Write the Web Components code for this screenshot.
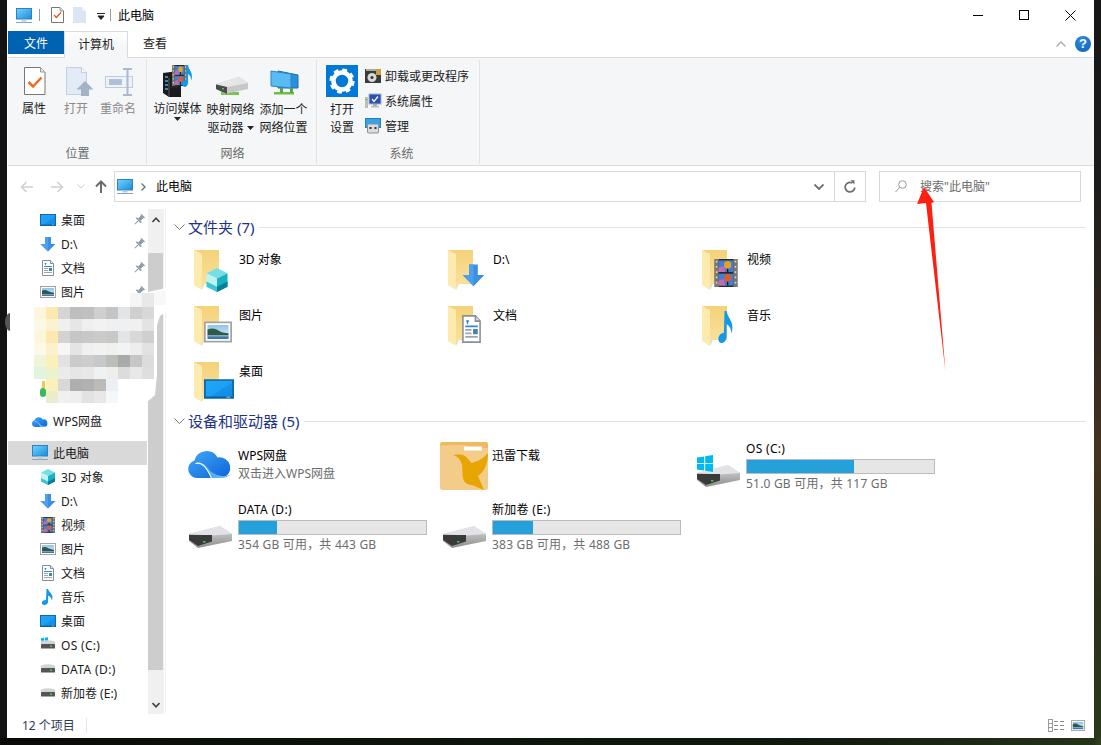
<!DOCTYPE html>
<html lang="zh-CN">
<head>
<meta charset="utf-8">
<title>此电脑</title>
<style>
  html, body { margin: 0; height: 745px; overflow: hidden; }
  body {
    position: relative;
    font: 12px "Noto Sans", "Noto Sans CJK SC", sans-serif;
    /* desktop wallpaper strips that show around the window */
    background-color: #121212;
    background-image:
      linear-gradient(to right, #0a0a08 0, #0c120a 300px, #10180c 800px, #24331a 1094px, #34441f 1101px),
      linear-gradient(to bottom, #161616 0, #1c1c1c 180px, #3a2b1e 390px, #46331f 450px, #2a3018 600px, #2a3a1a 745px);
    background-size: 1101px 7px, 7px 745px;
    background-position: 0 738px, 1094px 0;
    background-repeat: no-repeat;
  }
</style>
</head>
<body>
<file-explorer></file-explorer>
<privacy-mosaic></privacy-mosaic>
<red-arrow></red-arrow>

<script>
// Bodies shared by big and small variants of an icon. All are drawn in a 16x16 box.
const PARTS = {
  pc: `<defs><linearGradient id="pc" x1="0" y1="0" x2="1" y2="1"><stop offset="0" stop-color="#74d4f9"/><stop offset="1" stop-color="#1a8be0"/></linearGradient></defs>
    <rect x=".5" y=".5" width="15" height="10.5" fill="url(#pc)" stroke="#2a84c2"/>
    <rect x="5.5" y="11.5" width="5" height="2" fill="#b9cbd9"/><rect y="14" width="16" height="1" fill="#88a3bb"/>`,
  desktop: `<defs><linearGradient id="dk" x1="0" y1="0" x2="1" y2="1"><stop offset="0" stop-color="#22a6f8"/><stop offset=".55" stop-color="#1c9ff5"/><stop offset=".56" stop-color="#1592ea"/><stop offset="1" stop-color="#118ae0"/></linearGradient></defs>
    <rect x=".5" y="2.5" width="15" height="11" fill="url(#dk)" stroke="#0d6bad"/><rect x="1" y="12.7" width="14" height=".6" fill="#0a4f86"/><rect x="12" y="12.8" width="2" height=".4" fill="#fff"/>`,
  down: `<path d="M5 1h6v7h4.500L8 15.500.5 8H5z" fill="#3b8fe4"/><path d="M5 1h3v14.500L.5 8H5z" fill="#4da0ee"/>`,
  doc: `<path d="M2.500.5h8l3 3v12h-11z" fill="#fff" stroke="#8a8f96"/><path d="M10.500.5v3h3" fill="#dfe4ea" stroke="#8a8f96"/>
    <path d="M4.500 3l2 0-1 2.500z" fill="#2d7fd0"/><path d="M4 6.500h8" stroke="#2d8ad8"/><path d="M4 8.500h4M4 10.500h4M4 12.500h8" stroke="#9aa5b0"/><rect x="9" y="8" width="3" height="3" fill="#4c80a8"/>`,
  picture: `<defs><linearGradient id="sky" x1="0" y1="0" x2="0" y2="1"><stop offset="0" stop-color="#8fc4e8"/><stop offset="1" stop-color="#e4f1f6"/></linearGradient></defs>
    <rect x=".5" y="2.5" width="15" height="11" fill="#fff" stroke="#a3a3a3"/><rect x="2" y="4" width="12" height="8" fill="url(#sky)"/>
    <path d="M2 6.500c3-1.200 5-.3 7 1 2 .9 3 1 5 1.200V10H2z" fill="#2f5a48"/><rect x="2" y="10" width="12" height="2" fill="#3f76ac"/><rect x="2" y="10" width="12" height=".5" fill="#a8c8dc"/>`,
  film: `<rect x="1" width="14" height="16" fill="#2a2a2a"/><rect x="1" width="2.500" height="16" fill="#777"/><rect x="12.500" width="2.500" height="16" fill="#777"/>
    <path d="M1.700 1h1v1h-1zM1.700 4h1v1h-1zM1.700 7h1v1h-1zM1.700 10h1v1h-1zM1.700 13h1v1h-1zM13.300 1h1v1h-1zM13.300 4h1v1h-1zM13.300 7h1v1h-1zM13.300 10h1v1h-1zM13.300 13h1v1h-1z" fill="#e8d7a0"/>
    <rect x="3.500" y=".8" width="9" height="6.600" fill="#3f7fd8"/><rect x="3.500" y="8.400" width="9" height="6.800" fill="#3f7fd8"/>
    <path d="M3.500 5l3-1 1 3.400h-4.500zM3.500 12.400l3-1 1 3.800h-4.500z" fill="#c66ab0"/>
    <circle cx="9" cy="3.400" r="2.200" fill="#e8a21e"/><circle cx="9" cy="10.800" r="2.200" fill="#e05a2a"/><path d="M8.600 5.500h.8v2h-.8zM8.600 13h.8v2h-.8z" fill="#111"/>`,
  note: `<path d="M6.500 0h1.600c.3 2.800 4.400 4.400 4.400 8.300 0 1.200-.4 2.300-1 3 .3-2.700-1.700-4-3.400-4.800v6.200c0 1.800-1.900 3.300-3.800 3.300-1.400 0-2.500-.8-2.500-2 0-1.700 2-3 3.800-3 .1 0 .2 0 .4 0z" fill="#129ae8"/>`,
  cube: `<path d="M8 0l7 3.500L8 7 1 3.500z" fill="#74e0e6"/><path d="M1 3.500L8 7v9l-7-3.500z" fill="#bff2f2"/><path d="M15 3.500L8 7v9l7-3.500z" fill="#19b0c2"/><path d="M1 9l7 3.500V16l-7-3.500z" fill="#3cc6d2"/><path d="M15 9l-7 3.500V16l7-3.500z" fill="#0a7f9a"/>`,
  smalldrive: `<path d="M1 4.500Q8 2 15 4.500V7H1z" fill="#d4d4d6"/><rect x="1" y="7" width="14" height="4.500" rx=".5" fill="#555"/><rect x="10" y="8.500" width="2" height="1.300" fill="#41dc55"/>`,
  winpanes: `<path d="M1 1.300l3-.5v3H1zM4.800.700L8 .2v3.600H4.800zM1 4.500h3v3l-3-.5zM4.800 4.500H8v3.800l-3.200-.5z" fill="#00b4f1"/>`,
  cloud: `<defs><linearGradient id="wps" x1="0" y1="0" x2="1" y2="1"><stop offset="0" stop-color="#40a9f8"/><stop offset="1" stop-color="#0e63da"/></linearGradient>
    <linearGradient id="wpb" x1="0" y1="0" x2="1" y2="0"><stop offset="0" stop-color="#2a9af5"/><stop offset="1" stop-color="#75c8fb"/></linearGradient></defs>
    <path d="M9 30a9 9 0 0 1-2.500-17.600A12.500 12.500 0 0 1 29.500 9.500 10.200 10.200 0 0 1 34 30z" fill="url(#wps)"/>
    <path d="M7.500 15.800C15 13 20 20 24.500 30H34c3 0 6-1 8-3C34 30 25 27 20 20 16 15 12 14 7.500 15.800z" fill="url(#wpb)"/>
    <path d="M7.500 15.500C15 13.500 19.500 21 23.500 30" fill="none" stroke="#fff" stroke-width="1.200"/>`
};

const fit = (name, x, y, w, h) => `<svg x="${x}" y="${y}" width="${w}" height="${h}" viewBox="0 0 16 16" preserveAspectRatio="none">${PARTS[name]}</svg>`;

const FOLDER = `<defs><linearGradient id="fb" x1="0" y1="0" x2="0" y2="1"><stop offset="0" stop-color="#f5d27a"/><stop offset="1" stop-color="#f9e09a"/></linearGradient></defs>
  <path d="M4 2h25v34H12z" fill="url(#fb)"/><path d="M4 2l8 4v36l-8-5z" fill="#fdeaae"/><path d="M12 36v6l3-6z" fill="#e9e0c0"/>`;

const bigDrive = `<defs><linearGradient id="hd" x1="0" y1="0" x2="0" y2="1"><stop offset="0" stop-color="#dcdcde"/><stop offset="1" stop-color="#8e8e8e"/></linearGradient></defs>
  <path d="M0 8L31 0l12 8v7L9 22l-9-7z" fill="url(#hd)"/><path d="M0 8L31 0l12 8-20 1.500z" fill="#e2e3e7"/>
  <path d="M0 9h23v6.500L9 20 0 14z" fill="#3a3a3a"/><rect x="14" y="15" width="2.500" height="1.500" fill="#35d04a"/>`;

const ICONS = {
  pc: [16, 16, PARTS.pc], desktop: [16, 16, PARTS.desktop], down: [16, 16, PARTS.down], doc: [16, 16, PARTS.doc],
  picture: [16, 16, PARTS.picture], film: [16, 16, PARTS.film], note: [16, 16, PARTS.note], cube: [16, 16, PARTS.cube],
  drive: [16, 16, PARTS.smalldrive], windrive: [16, 16, PARTS.winpanes + PARTS.smalldrive],
  cloud: [44, 30, PARTS.cloud],
  pin: [12, 12, `<g transform="rotate(45 6 6)" fill="#8b98a3"><rect x="3.500" y="0" width="5" height="1.500"/><rect x="4.300" y="1.500" width="3.400" height="4"/><rect x="2.500" y="5.500" width="7" height="1.500"/><rect x="5.500" y="7" width="1" height="5"/></g>`],

  // Large tiles: folder plus the overlay for its kind
  f3d: [48, 48, FOLDER + fit('cube', 15, 20, 24, 24)],
  fdown: [48, 48, FOLDER + fit('down', 18, 15, 23, 24)],
  fvideo: [48, 48, FOLDER + fit('film', 15, 11, 26, 28)],
  fpic: [48, 48, FOLDER + fit('picture', 14, 14, 28, 28)],
  fdoc: [48, 48, FOLDER + fit('doc', 15, 11, 25, 28)],
  fnote: [48, 48, FOLDER + fit('note', 18, 7, 21, 32)],
  fdesk: [48, 48, FOLDER + fit('desktop', 14, 16, 30, 26)],
  xunlei: [48, 48, `<rect width="48" height="48" rx="2.500" fill="#f3cc8a"/><path d="M0 3.500Q0 0 3 0h42q3 0 3 3v3H30l-6-3z" fill="#efb95f"/><rect x="24" y="4.500" width="18" height="4" rx=".5" fill="#fff"/>
    <path d="M13 13C17 12.500 21 12 24 13.500 27 15 29 18 31 21 37 20 43 17 48 11 48 22 44 30 38 34L44 48 32 43C28 43 24 41 23 36 22 30 23 24 21 20 19 16 17 14 13 13Z" fill="#e8a400"/>`],
  hdd: [44, 22, bigDrive],
  winhdd: [44, 34, `<g transform="translate(0 10)">${bigDrive}</g><path d="M0 2.500L7.200 1.500v6.700H0zM8.200 1.300L16 0v8.200H8.200zM0 9h7.200v6.500L0 14.500zM8.200 9H16v8L8.200 15.800z" fill="#00b9f2"/>`],

  // Ribbon, 36x36 box
  props: [36, 36, `<path d="M8.500 5.500h16l4.500 4.500v22.500H8.500z" fill="#fff" stroke="#777"/><path d="M24.500 5.500V10H29" fill="#e6e6e6" stroke="#999"/><path d="M12.500 20l4.500 4.500 8.500-9" fill="none" stroke="#f26a21" stroke-width="2.500"/>`],
  propsmall: [13, 16, `<path d="M.5.500h8.500l3.500 3.500v11.500H.5z" fill="#fff" stroke="#777"/><path d="M9 .5V4h3.500" fill="#ddd" stroke="#999"/><path d="M3 8l2.300 2.500L10 5.500" fill="none" stroke="#e8521e" stroke-width="1.300"/>`],
  blankdoc: [13, 16, `<path d="M0 0h9l4 4v12H0z" fill="#dbe6f4"/><path d="M9 0l4 4H9z" fill="#f0f5fb"/>`],
  open: [36, 36, `<path d="M8.500 5.500h15l5 5v22h-20z" fill="#e3ebf6" stroke="#c0cfe2"/><path d="M23.500 5.500v5h5" fill="#f4f7fb" stroke="#c0cfe2"/><path d="M27 19l8.500 8.500H31V34h-8v-6.500h-4.500z" fill="#a3b2c4"/>`],
  rename: [36, 36, `<rect x="5.500" y="14.500" width="27" height="11" fill="#eef3f9" stroke="#bdcbdc"/><rect x="9" y="17" width="13" height="6" fill="#b0c1d6"/><path d="M23 7h9M27.500 7v26M23 33h9" fill="none" stroke="#a9bace" stroke-width="2"/>`],
  media: [36, 36, `<path d="M3 11l15-2 3 5v21H9L3 31z" fill="#1b1b1f"/><path d="M9 16v19" stroke="#5b5b66"/><path d="M5 15h3M5 19h3M5 23h3M5 27h3" stroke="#4aa8e8" stroke-width="1.300"/><path d="M11 21h7M11 25h7" stroke="#333"/>
    ${fit('film', 11, 3, 17, 21)}${fit('note', 21, 3, 14, 22)}`],
  netdrive: [36, 36, `<path d="M8 30h18v3H8z" fill="#7cc24e"/><path d="M15 26h4v5h-4z" fill="#5aa83a"/><path d="M3 22L26 15l9 6v6L12 32l-9-5z" fill="#c8c8c8"/><path d="M3 22L26 15l9 6-21 4z" fill="#e6e6e6"/><path d="M3 22.500l11 2.500v7l-11-5z" fill="#4a4a4a"/><rect x="9" y="26" width="2" height="1.500" fill="#35d04a"/>`],
  addnet: [36, 36, `<path d="M12 9l20 4v13H12z" fill="#2a8fdc" stroke="#1c6eb2"/><path d="M5 9l20 3v14L5 24z" fill="#58bcf2" stroke="#2c86c8"/><path d="M8 30h20v2.500H8z" fill="#72bc4a"/><path d="M14 26h3v5h-3zM24 26h3v5h-3z" fill="#5aa83a"/>`],
  gear: [36, 36, `<rect x="2" y="3" width="32" height="32" fill="#0078d7"/><circle cx="18" cy="19" r="8.500" fill="none" stroke="#fff" stroke-width="4.500"/><circle cx="18" cy="19" r="10.800" fill="none" stroke="#fff" stroke-width="3.600" stroke-dasharray="4.600 3.880"/>`],
  uninstall: [16, 16, `<rect y="1" width="16" height="14" fill="#3a3a3a"/><rect x="11" y="1" width="5" height="6" fill="#c9a23e"/><rect x="1" y="1" width="10" height="2" fill="#a5ae96"/><circle cx="7" cy="9.500" r="4.500" fill="#d8d8d8"/><circle cx="7" cy="9.500" r="1.500" fill="#333"/>`],
  sysprops: [16, 16, `<rect x="4" y="1" width="12" height="10" fill="#2a4fb5" stroke="#a7b4c4"/><path d="M7 6l2 2.500 4-5" fill="none" stroke="#fff" stroke-width="1.300"/><path d="M8 11h4v2H8z" fill="#aaa"/><rect x="6" y="13" width="8" height="1.500" fill="#bbb"/><rect y="4" width="3" height="11" fill="#b9c0b4"/><rect x=".8" y="6" width="1.400" height="1" fill="#3ec04a"/>`],
  manage: [16, 16, `<rect x=".5" y=".5" width="15" height="9" fill="#33a4ea" stroke="#2a80bc"/><rect x="2.500" y="6" width="11" height="9" rx="1" fill="#d8dce0" stroke="#8a9096"/><rect x="4.500" y="9" width="2" height="2" fill="#333"/><rect x="9.500" y="9" width="2" height="2" fill="#333"/>`]
};

class AppIcon extends HTMLElement {
  connectedCallback() {
    const [vw, vh, body] = ICONS[this.getAttribute('name')];
    const w = this.getAttribute('w') || vw;
    const h = this.getAttribute('h') || vh;
    this.attachShadow({ mode: 'open' }).innerHTML = `
      <style>:host { display: block; flex: none; width: ${w}px; height: ${h}px; } svg { display: block; overflow: visible; }</style>
      <svg width="${w}" height="${h}" viewBox="0 0 ${vw} ${vh}">${body}</svg>`;
  }
}
customElements.define('app-icon', AppIcon);

// Title bar with quick access toolbar and window buttons
class TitleBar extends HTMLElement {
  connectedCallback() {
    this.attachShadow({ mode: 'open' }).innerHTML = `
      <style>
        :host { display: flex; align-items: center; height: 30px; padding-left: 8px; color: #000; }
        .sep { width: 1px; height: 12px; background: #9a9a9a; }
        .caps { margin-left: auto; display: flex; padding-right: 1px; }
        .caps div { width: 46px; height: 30px; display: flex; align-items: center; justify-content: center; }
        .title { margin-left: 7px; }
      </style>
      <app-icon name="pc" style="margin-top:1px"></app-icon>
      <span class="sep" style="margin-left:7px"></span>
      <app-icon name="propsmall" style="margin-left:11px"></app-icon>
      <app-icon name="blankdoc" style="margin-left:9px"></app-icon>
      <svg width="8" height="7" style="margin-left:11px;margin-top:2px"><path d="M0 .5h8M1 3h6L4 6.500z" stroke="#222" stroke-width="1" fill="#222"/></svg>
      <span class="sep" style="margin-left:5px"></span>
      <span class="title">此电脑</span>
      <div class="caps">
        <div><svg width="10" height="10"><path d="M0 5.500h10" stroke="#000"/></svg></div>
        <div><svg width="10" height="10"><rect x=".5" y=".5" width="9" height="9" fill="none" stroke="#000"/></svg></div>
        <div><svg width="11" height="11"><path d="M.5.500l10 10M10.500.500l-10 10" stroke="#000"/></svg></div>
      </div>`;
  }
}
customElements.define('title-bar', TitleBar);

class RibbonTabs extends HTMLElement {
  connectedCallback() {
    this.attachShadow({ mode: 'open' }).innerHTML = `
      <style>
        :host { display: flex; height: 27px; position: relative; box-sizing: border-box; padding-top: 1px; }
        .tab { width: 54px; height: 23px; display: flex; align-items: center; justify-content: center; color: #222; }
        .file { width: 56px; background: #0063b1; color: #fff; }
        .active { height: 27px; background: linear-gradient(#fff, #f5f6f7 60%); border: 1px solid #dadbdc; border-bottom: 0; padding-bottom: 3px; box-sizing: border-box; width: 64px; position: relative; z-index: 1; }
        .help { margin-left: auto; display: flex; align-items: center; height: 25px; gap: 9px; padding-right: 3px; }
        .q { width: 16px; height: 16px; border-radius: 50%; background: radial-gradient(circle at 40% 30%, #2f8ae0, #0a5fb4); color: #fff; font: bold 13px/16px "Liberation Sans", sans-serif; text-align: center; }
      </style>
      <div class="tab file">文件</div>
      <div class="tab active">计算机</div>
      <div class="tab">查看</div>
      <div class="help">
        <svg width="10" height="6"><path d="M.5 5.500L5 1l4.500 4.500" fill="none" stroke="#aaa" stroke-width="1.300"/></svg>
        <div class="q">?</div>
      </div>`;
  }
}
customElements.define('ribbon-tabs', RibbonTabs);

class RibbonGroup extends HTMLElement {
  connectedCallback() {
    this.attachShadow({ mode: 'open' }).innerHTML = `
      <style>
        :host { display: flex; flex-direction: column; box-sizing: border-box; height: 104px; margin-top: 2px; border-right: 1px solid #e2e3e4; }
        .body { display: flex; flex: 1; padding-top: 2px; }
        .label { text-align: center; color: #6a6a6a; line-height: 18px; height: 18px; margin-bottom: 1px; margin-right: ${this.getAttribute('shift') || 0}px; }
      </style>
      <div class="body"><slot></slot></div>
      <div class="label">${this.getAttribute('label')}</div>`;
  }
}
customElements.define('ribbon-group', RibbonGroup);

class RibbonButton extends HTMLElement {
  connectedCallback() {
    const off = this.hasAttribute('disabled');
    this.attachShadow({ mode: 'open' }).innerHTML = `
      <style>
        :host { display: flex; flex-direction: column; align-items: center; text-align: center; line-height: 18px; color: ${off ? '#8a8a8a' : '#222'}; }
        app-icon { margin-bottom: ${this.getAttribute('drop') || 3}px; }
      </style>
      <app-icon name="${this.getAttribute('icon')}"></app-icon>
      <div><slot></slot></div>`;
  }
}
customElements.define('ribbon-button', RibbonButton);

class RibbonSmall extends HTMLElement {
  connectedCallback() {
    this.attachShadow({ mode: 'open' }).innerHTML = `
      <style>:host { display: flex; align-items: center; gap: 4px; height: 24px; color: #222; white-space: nowrap; }</style>
      <app-icon name="${this.getAttribute('icon')}"></app-icon><slot></slot>`;
  }
}
customElements.define('ribbon-small', RibbonSmall);

class RibbonPanel extends HTMLElement {
  connectedCallback() {
    const caret = `<svg width="7" height="4" style="vertical-align:2px"><path d="M0 0h7L3.500 4z" fill="#222"/></svg>`;
    this.attachShadow({ mode: 'open' }).innerHTML = `
      <style>
        :host { display: flex; height: 109px; box-sizing: border-box; background: #f5f6f7; border-top: 1px solid #dadbdc; border-bottom: 1px solid #dadbdc; }
        .w42 { width: 42px; } .w53 { width: 53px; } .w36 { width: 36px; }
        .place { width: 139px; padding-left: 5px; box-sizing: border-box; }
        .net { width: 170px; padding-left: 4px; box-sizing: border-box; }
        .sys { width: 163px; padding-left: 7px; box-sizing: border-box; }
        .list { margin-left: 5px; margin-top: 2px; display: flex; flex-direction: column; gap: 1px; }
      </style>
      <ribbon-group class="place" label="位置" shift="4">
        <ribbon-button class="w42" icon="props" drop="2">属性</ribbon-button>
        <ribbon-button class="w42" icon="open" drop="2" disabled>打开</ribbon-button>
        <ribbon-button class="w42" icon="rename" drop="2" disabled>重命名</ribbon-button>
      </ribbon-group>
      <ribbon-group class="net" label="网络" shift="2">
        <ribbon-button class="w53" icon="media" drop="2"><span style="white-space:nowrap">访问媒体</span><div style="line-height:8px;margin-top:-3px">${caret}</div></ribbon-button>
        <ribbon-button class="w53" icon="netdrive"><span style="white-space:nowrap">映射网络<br>驱动器 ${caret}</span></ribbon-button>
        <ribbon-button class="w53" icon="addnet"><span style="white-space:nowrap">添加一个<br>网络位置</span></ribbon-button>
      </ribbon-group>
      <ribbon-group class="sys" label="系统">
        <ribbon-button class="w36" icon="gear">打开<br>设置</ribbon-button>
        <div class="list">
          <ribbon-small icon="uninstall">卸载或更改程序</ribbon-small>
          <ribbon-small icon="sysprops">系统属性</ribbon-small>
          <ribbon-small icon="manage">管理</ribbon-small>
        </div>
      </ribbon-group>`;
  }
}
customElements.define('ribbon-panel', RibbonPanel);

class AddressBar extends HTMLElement {
  connectedCallback() {
    this.attachShadow({ mode: 'open' }).innerHTML = `
      <style>
        :host { display: flex; align-items: flex-start; height: 42px; box-sizing: border-box; padding: 5px 13px 0 12px; }
        .navs { display: flex; align-items: center; height: 31px; width: 94px; flex: none; }
        .box { height: 31px; box-sizing: border-box; border: 1px solid #d9d9d9; display: flex; align-items: center; }
        .box span { position: relative; top: -1px; }
        .addr { width: 752px; padding-left: 2px; flex: none; }
        .search { width: 202px; margin-left: 13px; padding-left: 15px; color: #6d6d6d; flex: none; }
        .end { margin-left: auto; display: flex; align-items: center; height: 100%; }
        .drop { width: 30px; display: flex; justify-content: center; }
        .refresh { width: 30px; height: 100%; border-left: 1px solid #d9d9d9; display: flex; align-items: center; justify-content: center; }
      </style>
      <div class="navs">
        <svg width="14" height="12"><path d="M13 6H2M6.500 1L1.500 6l5 5" fill="none" stroke="#cfcfcf" stroke-width="1.500"/></svg>
        <svg width="14" height="12" style="margin-left:16px"><path d="M1 6h11M7.500 1l5 5-5 5" fill="none" stroke="#cfcfcf" stroke-width="1.500"/></svg>
        <svg width="8" height="5" style="margin-left:13px"><path d="M.5.500L4 4l3.500-3.500" fill="none" stroke="#cfcfcf"/></svg>
        <svg width="12" height="13" style="margin-left:10px"><path d="M6 13V2M1 6.500L6 1.500l5 5" fill="none" stroke="#6b6b6b" stroke-width="2"/></svg>
      </div>
      <div class="box addr">
        <app-icon name="pc"></app-icon>
        <svg width="5" height="8" style="margin-left:8px;margin-right:10px"><path d="M.5.500L4 4 .5 7.500" fill="none" stroke="#6b6b6b" stroke-width="1.300"/></svg>
        <span>此电脑</span>
        <div class="end">
          <div class="drop"><svg width="10" height="6"><path d="M.5.500L5 5 9.500.500" fill="none" stroke="#6b6b6b" stroke-width="1.800"/></svg></div>
          <div class="refresh"><svg width="12" height="13" viewBox="0 0 12 13"><path d="M8.500 3A4.800 4.800 0 1 0 10.800 7.500" fill="none" stroke="#6f6f6f" stroke-width="1.800"/><path d="M6.500 .3l4 0 0 4.200z" fill="#6f6f6f"/></svg></div>
        </div>
      </div>
      <div class="box search">
        <svg width="12" height="13" viewBox="0 0 12 13"><circle cx="7.500" cy="4.500" r="3.800" fill="none" stroke="#9a9a9a"/><path d="M4.800 7.200L.5 12" stroke="#b58f80"/></svg>
        <span style="margin-left:13px">搜索"此电脑"</span>
      </div>`;
  }
}
customElements.define('address-bar', AddressBar);

class NavItem extends HTMLElement {
  connectedCallback() {
    const selected = this.hasAttribute('selected');
    const top = this.hasAttribute('top');
    const icon = this.getAttribute('icon');
    this.attachShadow({ mode: 'open' }).innerHTML = `
      <style>
        :host { display: flex; align-items: center; height: 24px; padding-left: ${top ? 24 : 32}px; gap: 5px; color: #1a1a1a; background: ${selected ? '#d9d9d9' : 'transparent'}; white-space: nowrap; }
        .pin { margin-left: auto; margin-right: 2px; }
      </style>
      <app-icon name="${icon}" w="16" h="${icon === 'cloud' ? 11 : 16}"></app-icon>
      <slot></slot>
      ${this.hasAttribute('pinned') ? '<app-icon class="pin" name="pin"></app-icon>' : ''}`;
  }
}
customElements.define('nav-item', NavItem);

class NavPane extends HTMLElement {
  connectedCallback() {
    this.attachShadow({ mode: 'open' }).innerHTML = `
      <style>
        :host { display: flex; flex: none; width: 158px; box-sizing: border-box; border-right: 1px solid #f0f0f0; }
        .list { width: 139px; flex: none; }
        .bar { width: 16px; margin: 1px 0 0 1px; background: #f0f0f0; display: flex; flex-direction: column; }
        .end { height: 44px; display: flex; justify-content: center; padding-top: 8px; box-sizing: border-box; }
        .end.low { align-items: flex-end; padding: 0 0 6px; }
        .thumb { flex: 1; background: #cdcdcd; width: 15px; }
      </style>
      <div class="list">
        <nav-item icon="desktop" pinned>桌面</nav-item>
        <nav-item icon="down" pinned>D:\\</nav-item>
        <nav-item icon="doc" pinned>文档</nav-item>
        <nav-item icon="picture" pinned>图片</nav-item>
        <div style="height:105px"></div>
        <nav-item icon="cloud" top>WPS网盘</nav-item>
        <div style="height:8px"></div>
        <nav-item icon="pc" top selected>此电脑</nav-item>
        <nav-item icon="cube">3D 对象</nav-item>
        <nav-item icon="down">D:\\</nav-item>
        <nav-item icon="film">视频</nav-item>
        <nav-item icon="picture">图片</nav-item>
        <nav-item icon="doc">文档</nav-item>
        <nav-item icon="note">音乐</nav-item>
        <nav-item icon="desktop">桌面</nav-item>
        <nav-item icon="windrive" style="letter-spacing:.3px">OS (C:)</nav-item>
        <nav-item icon="drive" style="letter-spacing:.4px">DATA (D:)</nav-item>
        <nav-item icon="drive">新加卷 (E:)</nav-item>
      </div>
      <div class="bar">
        <div class="end"><svg width="8" height="6"><path d="M.5 5L4 1.200 7.500 5" fill="none" stroke="#444" stroke-width="1.600"/></svg></div>
        <div class="thumb"></div>
        <div class="end low"><svg width="8" height="6"><path d="M.5 1L4 4.800 7.500 1" fill="none" stroke="#444" stroke-width="1.600"/></svg></div>
      </div>`;
  }
}
customElements.define('nav-pane', NavPane);

class GroupHeader extends HTMLElement {
  connectedCallback() {
    this.attachShadow({ mode: 'open' }).innerHTML = `
      <style>
        :host { display: flex; align-items: center; height: 20px; padding: 0 8px; color: #1e3287; font-size: 15px; }
        svg { margin-right: 3px; flex: none; }
        span { position: relative; top: -1px; }
        .line { flex: 1; height: 1px; background: #e2e2e2; margin-left: 5px; }
      </style>
      <svg width="11" height="6"><path d="M.5.500L5.500 5.500 10.500.500" fill="none" stroke="#777"/></svg>
      <span><slot></slot></span>
      <div class="line"></div>`;
  }
}
customElements.define('group-header', GroupHeader);

// Folder tile: 48px icon and a name beside it
class FolderTile extends HTMLElement {
  connectedCallback() {
    this.attachShadow({ mode: 'open' }).innerHTML = `
      <style>
        :host { display: flex; height: 56px; color: #000; }
        app-icon { margin: 3px 1px 0 0; }
        div { padding-top: 6px; line-height: 18px; white-space: nowrap; }
      </style>
      <app-icon name="${this.getAttribute('icon')}"></app-icon><div><slot></slot></div>`;
  }
}
customElements.define('folder-tile', FolderTile);

class LinkTile extends HTMLElement {
  connectedCallback() {
    const sub = this.getAttribute('sub');
    const ox = this.getAttribute('ox') || 0;
    const oy = this.getAttribute('oy') || 0;
    this.attachShadow({ mode: 'open' }).innerHTML = `
      <style>
        :host { display: flex; height: 61px; color: #000; }
        .pic { width: 49px; flex: none; }
        .text { padding-top: 11px; line-height: 18px; white-space: nowrap; }
        .sub { color: #6d6d6d; }
      </style>
      <div class="pic"><app-icon name="${this.getAttribute('icon')}" style="margin:${oy}px 0 0 ${ox}px"></app-icon></div>
      <div class="text"><slot></slot>${sub ? `<div class="sub">${sub}</div>` : ''}</div>`;
  }
}
customElements.define('link-tile', LinkTile);

class DriveTile extends HTMLElement {
  connectedCallback() {
    const pct = this.getAttribute('used');
    const oy = this.getAttribute('oy') || 29;
    this.attachShadow({ mode: 'open' }).innerHTML = `
      <style>
        :host { display: flex; height: 61px; color: #000; }
        .pic { width: 49px; flex: none; }
        .info { width: 189px; padding-top: 4px; white-space: nowrap; }
        .name { line-height: 18px; height: 19px; letter-spacing: .3px; }
        .bar { height: 15px; box-sizing: border-box; border: 1px solid #bcbcbc; background: #e6e6e6; }
        .bar div { height: 100%; width: ${pct}px; background: #26a0da; }
        .sub { color: #6d6d6d; line-height: 18px; margin-top: 1px; letter-spacing: .2px; }
      </style>
      <div class="pic"><app-icon name="${this.getAttribute('icon')}" style="margin-top:${oy}px"></app-icon></div>
      <div class="info">
        <div class="name"><slot></slot></div>
        <div class="bar"><div></div></div>
        <div class="sub">${this.getAttribute('space')}</div>
      </div>`;
  }
}
customElements.define('drive-tile', DriveTile);

class ItemsView extends HTMLElement {
  connectedCallback() {
    this.attachShadow({ mode: 'open' }).innerHTML = `
      <style>
        :host { display: block; flex: 1; padding-top: 9px; }
        .grid { display: grid; grid-template-columns: repeat(3, 254px); padding-left: 24px; padding-top: 8px; }
        .dev { padding-left: 23px; padding-top: 5px; }
      </style>
      <group-header>文件夹 (7)</group-header>
      <div class="grid">
        <folder-tile icon="f3d">3D 对象</folder-tile>
        <folder-tile icon="fdown">D:\\</folder-tile>
        <folder-tile icon="fvideo">视频</folder-tile>
        <folder-tile icon="fpic">图片</folder-tile>
        <folder-tile icon="fdoc">文档</folder-tile>
        <folder-tile icon="fnote">音乐</folder-tile>
        <folder-tile icon="fdesk">桌面</folder-tile>
      </div>
      <group-header style="margin-top:-2px">设备和驱动器 (5)</group-header>
      <div class="grid dev">
        <link-tile icon="cloud" ox="-1" oy="12" sub="双击进入WPS网盘">WPS网盘</link-tile>
        <link-tile icon="xunlei" ox="-3" oy="6">迅雷下载</link-tile>
        <drive-tile icon="winhdd" used="107" oy="19" space="51.0 GB 可用，共 117 GB">OS (C:)</drive-tile>
        <drive-tile icon="hdd" used="38" space="354 GB 可用，共 443 GB">DATA (D:)</drive-tile>
        <drive-tile icon="hdd" used="40" space="383 GB 可用，共 488 GB">新加卷 (E:)</drive-tile>
      </div>`;
  }
}
customElements.define('items-view', ItemsView);

class StatusBar extends HTMLElement {
  connectedCallback() {
    this.attachShadow({ mode: 'open' }).innerHTML = `
      <style>
        :host { display: flex; align-items: center; height: 24px; padding: 0 9px 2px 14px; box-sizing: border-box; color: #2d3b55; }
        .sep { width: 1px; height: 15px; background: #e6e6e6; margin-left: 11px; }
        .views { margin-left: auto; display: flex; align-items: center; gap: 7px; }
      </style>
      <span>12 个项目</span><span class="sep"></span>
      <div class="views">
        <svg width="16" height="13"><g fill="none" stroke="#9a9a9a"><rect x=".5" y=".5" width="4" height="4"/><rect x=".5" y="4.500" width="4" height="4"/><rect x=".5" y="8.500" width="4" height="4"/></g><path d="M6 2.500h4M12 2.500h4M6 6.500h4M12 6.500h4M6 10.500h4M12 10.500h4" stroke="#8a8a8a"/></svg>
        <svg width="14" height="11" viewBox="0 2 16 12" preserveAspectRatio="none">${PARTS.picture}</svg>
      </div>`;
  }
}
customElements.define('status-bar', StatusBar);

class FileExplorer extends HTMLElement {
  connectedCallback() {
    this.attachShadow({ mode: 'open' }).innerHTML = `
      <style>
        :host { display: flex; flex-direction: column; box-sizing: border-box; width: 1087px; height: 738px; margin-left: 7px; padding-left: 1px; background: #fff; }
        .main { display: flex; flex: 1; min-height: 0; }
      </style>
      <title-bar></title-bar>
      <ribbon-tabs></ribbon-tabs>
      <ribbon-panel></ribbon-panel>
      <address-bar></address-bar>
      <div class="main"><nav-pane></nav-pane><items-view></items-view></div>
      <status-bar></status-bar>`;
  }
}
customElements.define('file-explorer', FileExplorer);

// Pixelated patch that hides a few navigation entries in the screenshot
class PrivacyMosaic extends HTMLElement {
  connectedCallback() {
    const rows = [
      ['#fdf5dc','#fde9b0','#d5d5d5','#bebebe','#c0c0c0','#cfcfcf','#c4c4c4','#e2e4e6','#cfcfcf','#d8d8d8'],
      ['#fcf8e8','#fdf2cf','#f0f0f0','#e6e6e6','#efefef','#f2f2f2','#f0f0f0','#eff0f2','#f0f0f0','#e2e3e5'],
      ['#fdf5dc','#fde8b0','#d5d2d2','#c6c6c6','#c8c8c8','#cccbca','#c8c8c6','#e2e4e6','#d8d8d8','#d0d0d0'],
      ['#fdf9e9','#fdf0cc','#f6f6f4','#e4e4e4','#f0f0f0','#f2f2f2','#f0f0ee','#f2f3f4','#eeeeee','#e2e2e2'],
      ['#eef5d8','#fbf0b8','#e2e2e2','#cbcbcb','#cdcdcd','#c6c8ca','#bdbdb9','#a9abab','#c6c6c6','#dcdcdc'],
      ['#e0f4de','#eef2cc','#ebebeb','#e6e6e6','#e8e8e8','#f0f1f2','#eeeeec','#dcdcdc','#e8e8e8','#dedede'],
      [null,'#fbf0b8','#d8d8d8','#aeaeae','#b0b2b2','#bcbbb8','#eaf0f5',null,null,null],
      [null,'#e9edcc','#f0f0f0','#eeeeee','#e2e2e2','#e8e8e8','#f5f7f9',null,null,null]
    ];
    let cells = '';
    rows.forEach((row, r) => row.forEach((c, i) => {
      if (c) cells += `<rect x="${34 + i * 12}" y="${307 + r * 12}" width="12" height="12" fill="${c}"/>`;
    }));
    this.attachShadow({ mode: 'open' }).innerHTML = `
      <style>:host { position: absolute; left: 0; top: 0; width: 1101px; height: 745px; pointer-events: none; } svg { display: block; }</style>
      <svg width="1101" height="745">
        <path d="M5 322a5 9 0 0 1 5-9v18a5 9 0 0 1-5-9z" fill="#555"/>
        <path d="M34 307L82 303 130 296 166 288V312L160 316 157 325V375L155 395 146 403H60L46 403 34 378z" fill="#fff"/>
        <rect x="130" y="293" width="12" height="14" fill="#f5f5f5"/><rect x="142" y="293" width="12" height="14" fill="#e8e8e8"/><rect x="154" y="291" width="12" height="14" fill="#f8f8f8"/>
        <rect x="42" y="381" width="3" height="7" fill="#f0c94a"/><rect x="40" y="388" width="6" height="9" rx="3" fill="#3cb85a"/>
        ${cells}
      </svg>`;
  }
}
customElements.define('privacy-mosaic', PrivacyMosaic);

// Red annotation arrow pointing at the search box
class RedArrow extends HTMLElement {
  connectedCallback() {
    this.attachShadow({ mode: 'open' }).innerHTML = `
      <style>:host { position: absolute; left: 0; top: 0; width: 1101px; height: 745px; pointer-events: none; } svg { display: block; }</style>
      <svg width="1101" height="745"><path d="M924 187L934 202 931.500 203 945.500 372 926 203 917 204z" fill="#ff1f10"/></svg>`;
  }
}
customElements.define('red-arrow', RedArrow);
</script>
</body>
</html>
